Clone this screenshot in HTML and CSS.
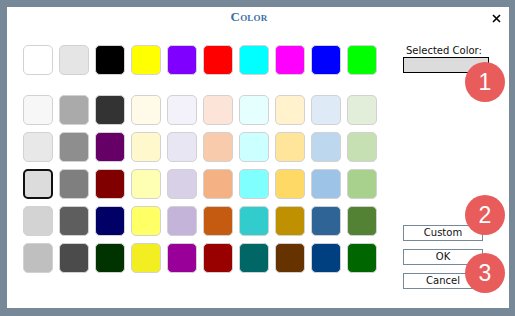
FILE: index.html
```html
<!DOCTYPE html>
<html>
<head>
<meta charset="utf-8">
<link rel="stylesheet" href="styles.css">
</head>
<body>
<div class="dialog">
  <div class="header">
    <div class="title">Color</div>
    <div class="close"><svg width="9" height="9" viewBox="0 0 9 9"><path d="M1 1L8 8M8 1L1 8" stroke="#000" stroke-width="1.6" fill="none"/></svg></div>
  </div>
  <div class="main">
    <div class="palette">
      <div class="row basic">
        <div class="sw" style="background:#ffffff"></div>
        <div class="sw" style="background:#e5e5e5"></div>
        <div class="sw" style="background:#000000"></div>
        <div class="sw" style="background:#ffff00"></div>
        <div class="sw" style="background:#8000ff"></div>
        <div class="sw" style="background:#ff0000"></div>
        <div class="sw" style="background:#00ffff"></div>
        <div class="sw" style="background:#ff00ff"></div>
        <div class="sw" style="background:#0000ff"></div>
        <div class="sw" style="background:#00ff00"></div>
      </div>
      <div class="shades">
        <div class="row">
          <div class="sw" style="background:#f7f7f7"></div>
          <div class="sw" style="background:#aaaaaa"></div>
          <div class="sw" style="background:#333333"></div>
          <div class="sw" style="background:#fffbe8"></div>
          <div class="sw" style="background:#f3f1f9"></div>
          <div class="sw" style="background:#fde4d8"></div>
          <div class="sw" style="background:#e5ffff"></div>
          <div class="sw" style="background:#fff2cc"></div>
          <div class="sw" style="background:#deeaf5"></div>
          <div class="sw" style="background:#e2eed9"></div>
        </div>
        <div class="row">
          <div class="sw" style="background:#e8e8e8"></div>
          <div class="sw" style="background:#8e8e8e"></div>
          <div class="sw" style="background:#660066"></div>
          <div class="sw" style="background:#fff8cc"></div>
          <div class="sw" style="background:#e9e6f3"></div>
          <div class="sw" style="background:#f7cbac"></div>
          <div class="sw" style="background:#ccffff"></div>
          <div class="sw" style="background:#ffe599"></div>
          <div class="sw" style="background:#bdd7ee"></div>
          <div class="sw" style="background:#c6e0b4"></div>
        </div>
        <div class="row">
          <div class="sw selected" style="background:#dcdcdc"></div>
          <div class="sw" style="background:#7f7f7f"></div>
          <div class="sw" style="background:#800000"></div>
          <div class="sw" style="background:#ffffb3"></div>
          <div class="sw" style="background:#d8d0e6"></div>
          <div class="sw" style="background:#f4b183"></div>
          <div class="sw" style="background:#80ffff"></div>
          <div class="sw" style="background:#ffd966"></div>
          <div class="sw" style="background:#9dc3e6"></div>
          <div class="sw" style="background:#a9d18e"></div>
        </div>
        <div class="row">
          <div class="sw" style="background:#d3d3d3"></div>
          <div class="sw" style="background:#5e5e5e"></div>
          <div class="sw" style="background:#000066"></div>
          <div class="sw" style="background:#ffff66"></div>
          <div class="sw" style="background:#c5b4da"></div>
          <div class="sw" style="background:#c55a11"></div>
          <div class="sw" style="background:#33cccc"></div>
          <div class="sw" style="background:#bf9000"></div>
          <div class="sw" style="background:#2f6496"></div>
          <div class="sw" style="background:#548235"></div>
        </div>
        <div class="row">
          <div class="sw" style="background:#bfbfbf"></div>
          <div class="sw" style="background:#4b4b4b"></div>
          <div class="sw" style="background:#003300"></div>
          <div class="sw" style="background:#f2ee22"></div>
          <div class="sw" style="background:#990099"></div>
          <div class="sw" style="background:#990000"></div>
          <div class="sw" style="background:#006666"></div>
          <div class="sw" style="background:#663300"></div>
          <div class="sw" style="background:#003f80"></div>
          <div class="sw" style="background:#006600"></div>
        </div>
      </div>
    </div>
    <div class="side">
      <div class="label">Selected Color:</div>
      <div class="preview"></div>
      <div class="buttons">
        <button class="btn">Custom</button>
        <button class="btn">OK</button>
        <button class="btn">Cancel</button>
      </div>
    </div>
  </div>
  <div class="badge b1">1</div>
  <div class="badge b2">2</div>
  <div class="badge b3">3</div>
</div>
</body>
</html>
```
FILE: styles.css
```css
html, body {
  margin: 0;
  padding: 0;
}
body {
  background: #778899;
  width: 515px;
  height: 316px;
  padding: 7px 6px 8px 7px;
  box-sizing: border-box;
  font-family: "DejaVu Sans", sans-serif;
}
.dialog {
  position: relative;
  background: #ffffff;
  width: 502px;
  height: 301px;
  box-sizing: border-box;
}
.header {
  display: flex;
  align-items: center;
  height: 18px;
  padding-top: 1px;
  padding-right: 8px;
}
.title {
  flex: 1;
  text-align: center;
  font-family: "Liberation Serif", serif;
  font-weight: bold;
  font-variant: small-caps;
  font-size: 13px;
  color: #3d6fa6;
  letter-spacing: 0.2px;
}
.close {
  width: 10px;
  height: 10px;
  margin-top: 3px;
  display: flex;
  align-items: center;
  justify-content: center;
}
.main {
  display: flex;
  margin-top: 19px;
  padding-left: 16px;
  gap: 26px;
}
.palette {
  display: flex;
  flex-direction: column;
  gap: 20px;
}
.shades {
  display: flex;
  flex-direction: column;
  gap: 7px;
}
.row {
  display: flex;
  gap: 6px;
}
.sw {
  width: 30px;
  height: 30px;
  box-sizing: border-box;
  border: 1px solid #d2d2d2;
  border-radius: 5px;
}
.sw.selected {
  border: 2px solid #111111;
}
.side {
  width: 86px;
  display: flex;
  flex-direction: column;
}
.label {
  font-size: 10px;
  line-height: 12px;
  color: #111;
  padding-left: 3px;
}
.preview {
  height: 16px;
  box-sizing: border-box;
  border: 1px solid #000;
  background: #dcdcdc;
}
.buttons {
  margin-top: 152px;
  display: flex;
  flex-direction: column;
  gap: 8px;
}
.btn {
  width: 80px;
  height: 16px;
  box-sizing: border-box;
  padding: 0;
  margin: 0;
  background: #ffffff;
  border: 1px solid #778899;
  font-family: "DejaVu Sans", sans-serif;
  font-size: 10px;
  line-height: 14px;
  color: #111;
}
.badge {
  position: absolute;
  left: 458px;
  width: 40px;
  height: 40px;
  border-radius: 50%;
  background: #e85c5c;
  color: #ffffff;
  font-family: "Liberation Sans", sans-serif;
  font-size: 23px;
  line-height: 40px;
  text-align: center;
}
.b1 { top: 55px; }
.b2 { top: 188px; }
.b3 { top: 246px; }
```
